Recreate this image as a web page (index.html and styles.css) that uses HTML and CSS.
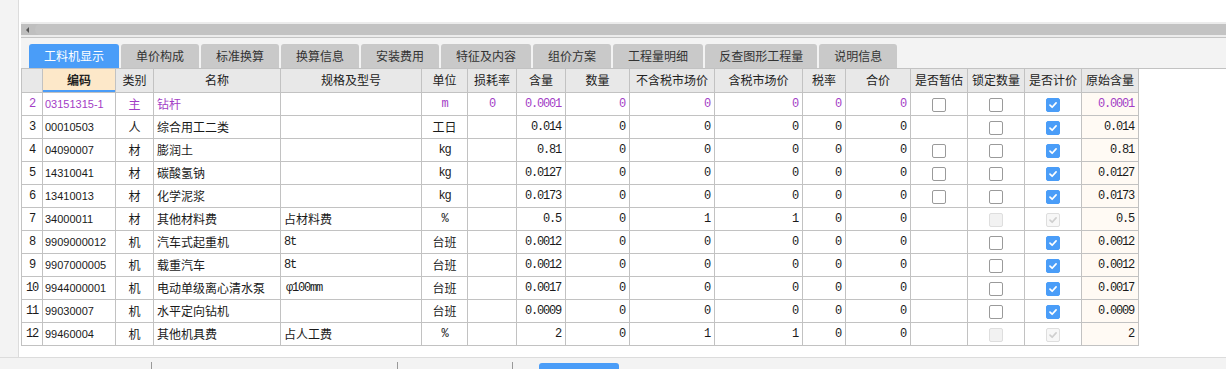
FILE: index.html
```html
<!DOCTYPE html>
<html lang="zh-CN">

<head>
  <meta charset="UTF-8">
  <title>工料机显示</title>
  <link rel="stylesheet" href="styles.css">
</head>

<body>
  <div class="app">
    <div class="workspace">
      <div class="side"></div>
      <div class="main">
        <div class="top-blank"></div>
        <div class="hscroll">
          <span class="hscroll-arrow"></span>
          <span class="hscroll-thumb"></span>
        </div>
        <div class="tab-bar">
          <div class="tab active">工料机显示</div>
          <div class="tab">单价构成</div>
          <div class="tab">标准换算</div>
          <div class="tab">换算信息</div>
          <div class="tab">安装费用</div>
          <div class="tab">特征及内容</div>
          <div class="tab">组价方案</div>
          <div class="tab">工程量明细</div>
          <div class="tab">反查图形工程量</div>
          <div class="tab">说明信息</div>
        </div>

        <div class="grid-panel">
          <table class="grid">
            <colgroup>
              <col style="width: 21px">
              <col style="width: 73px">
              <col style="width: 38px">
              <col style="width: 127px">
              <col style="width: 141px">
              <col style="width: 46px">
              <col style="width: 49px">
              <col style="width: 49px">
              <col style="width: 64px">
              <col style="width: 85px">
              <col style="width: 88px">
              <col style="width: 43px">
              <col style="width: 65px">
              <col style="width: 57px">
              <col style="width: 57px">
              <col style="width: 57px">
              <col style="width: 57px">
            </colgroup>
            <thead>
              <tr>
                <th></th>
                <th class="sorted">编码</th>
                <th>类别</th>
                <th>名称</th>
                <th>规格及型号</th>
                <th>单位</th>
                <th>损耗率</th>
                <th>含量</th>
                <th>数量</th>
                <th>不含税市场价</th>
                <th>含税市场价</th>
                <th>税率</th>
                <th>合价</th>
                <th>是否暂估</th>
                <th>锁定数量</th>
                <th>是否计价</th>
                <th>原始含量</th>
              </tr>
            </thead>
            <tbody>
              <tr class="main-row">
                <td class="no">2</td>
                <td class="code">03151315-1</td>
                <td class="center">主</td>
                <td>钻杆</td>
                <td></td>
                <td class="center num">m</td>
                <td class="center num">0</td>
                <td class="num right">0.0001</td>
                <td class="num right">0</td>
                <td class="num right">0</td>
                <td class="num right">0</td>
                <td class="num right">0</td>
                <td class="num right">0</td>
                <td class="center"><span class="cb"></span></td>
                <td class="center"><span class="cb"></span></td>
                <td class="center"><span class="cb on"><svg viewBox="0 0 14 14"><path d="M3.5 7.2 6 9.6 10.6 4.6"/></svg></span></td>
                <td class="num right orig">0.0001</td>
              </tr>
              <tr>
                <td class="no">3</td>
                <td class="code">00010503</td>
                <td class="center">人</td>
                <td>综合用工二类</td>
                <td></td>
                <td class="center">工日</td>
                <td></td>
                <td class="num right">0.014</td>
                <td class="num right">0</td>
                <td class="num right">0</td>
                <td class="num right">0</td>
                <td class="num right">0</td>
                <td class="num right">0</td>
                <td></td>
                <td class="center"><span class="cb"></span></td>
                <td class="center"><span class="cb on"><svg viewBox="0 0 14 14"><path d="M3.5 7.2 6 9.6 10.6 4.6"/></svg></span></td>
                <td class="num right orig">0.014</td>
              </tr>
              <tr>
                <td class="no">4</td>
                <td class="code">04090007</td>
                <td class="center">材</td>
                <td>膨润土</td>
                <td></td>
                <td class="center num">kg</td>
                <td></td>
                <td class="num right">0.81</td>
                <td class="num right">0</td>
                <td class="num right">0</td>
                <td class="num right">0</td>
                <td class="num right">0</td>
                <td class="num right">0</td>
                <td class="center"><span class="cb"></span></td>
                <td class="center"><span class="cb"></span></td>
                <td class="center"><span class="cb on"><svg viewBox="0 0 14 14"><path d="M3.5 7.2 6 9.6 10.6 4.6"/></svg></span></td>
                <td class="num right orig">0.81</td>
              </tr>
              <tr>
                <td class="no">5</td>
                <td class="code">14310041</td>
                <td class="center">材</td>
                <td>碳酸氢钠</td>
                <td></td>
                <td class="center num">kg</td>
                <td></td>
                <td class="num right">0.0127</td>
                <td class="num right">0</td>
                <td class="num right">0</td>
                <td class="num right">0</td>
                <td class="num right">0</td>
                <td class="num right">0</td>
                <td class="center"><span class="cb"></span></td>
                <td class="center"><span class="cb"></span></td>
                <td class="center"><span class="cb on"><svg viewBox="0 0 14 14"><path d="M3.5 7.2 6 9.6 10.6 4.6"/></svg></span></td>
                <td class="num right orig">0.0127</td>
              </tr>
              <tr>
                <td class="no">6</td>
                <td class="code">13410013</td>
                <td class="center">材</td>
                <td>化学泥浆</td>
                <td></td>
                <td class="center num">kg</td>
                <td></td>
                <td class="num right">0.0173</td>
                <td class="num right">0</td>
                <td class="num right">0</td>
                <td class="num right">0</td>
                <td class="num right">0</td>
                <td class="num right">0</td>
                <td class="center"><span class="cb"></span></td>
                <td class="center"><span class="cb"></span></td>
                <td class="center"><span class="cb on"><svg viewBox="0 0 14 14"><path d="M3.5 7.2 6 9.6 10.6 4.6"/></svg></span></td>
                <td class="num right orig">0.0173</td>
              </tr>
              <tr>
                <td class="no">7</td>
                <td class="code">34000011</td>
                <td class="center">材</td>
                <td>其他材料费</td>
                <td>占材料费</td>
                <td class="center num">%</td>
                <td></td>
                <td class="num right">0.5</td>
                <td class="num right">0</td>
                <td class="num right">1</td>
                <td class="num right">1</td>
                <td class="num right">0</td>
                <td class="num right">0</td>
                <td></td>
                <td class="center"><span class="cb disabled"></span></td>
                <td class="center"><span class="cb disabled on-dis"><svg viewBox="0 0 14 14"><path d="M3.5 7.2 6 9.6 10.6 4.6"/></svg></span></td>
                <td class="num right orig">0.5</td>
              </tr>
              <tr>
                <td class="no">8</td>
                <td class="code">9909000012</td>
                <td class="center">机</td>
                <td>汽车式起重机</td>
                <td class="num">8t</td>
                <td class="center">台班</td>
                <td></td>
                <td class="num right">0.0012</td>
                <td class="num right">0</td>
                <td class="num right">0</td>
                <td class="num right">0</td>
                <td class="num right">0</td>
                <td class="num right">0</td>
                <td></td>
                <td class="center"><span class="cb"></span></td>
                <td class="center"><span class="cb on"><svg viewBox="0 0 14 14"><path d="M3.5 7.2 6 9.6 10.6 4.6"/></svg></span></td>
                <td class="num right orig">0.0012</td>
              </tr>
              <tr>
                <td class="no">9</td>
                <td class="code">9907000005</td>
                <td class="center">机</td>
                <td>载重汽车</td>
                <td class="num">8t</td>
                <td class="center">台班</td>
                <td></td>
                <td class="num right">0.0012</td>
                <td class="num right">0</td>
                <td class="num right">0</td>
                <td class="num right">0</td>
                <td class="num right">0</td>
                <td class="num right">0</td>
                <td></td>
                <td class="center"><span class="cb"></span></td>
                <td class="center"><span class="cb on"><svg viewBox="0 0 14 14"><path d="M3.5 7.2 6 9.6 10.6 4.6"/></svg></span></td>
                <td class="num right orig">0.0012</td>
              </tr>
              <tr>
                <td class="no">10</td>
                <td class="code">9944000001</td>
                <td class="center">机</td>
                <td>电动单级离心清水泵</td>
                <td class="num spec">φ100mm</td>
                <td class="center">台班</td>
                <td></td>
                <td class="num right">0.0017</td>
                <td class="num right">0</td>
                <td class="num right">0</td>
                <td class="num right">0</td>
                <td class="num right">0</td>
                <td class="num right">0</td>
                <td></td>
                <td class="center"><span class="cb"></span></td>
                <td class="center"><span class="cb on"><svg viewBox="0 0 14 14"><path d="M3.5 7.2 6 9.6 10.6 4.6"/></svg></span></td>
                <td class="num right orig">0.0017</td>
              </tr>
              <tr>
                <td class="no">11</td>
                <td class="code">99030007</td>
                <td class="center">机</td>
                <td>水平定向钻机</td>
                <td></td>
                <td class="center">台班</td>
                <td></td>
                <td class="num right">0.0009</td>
                <td class="num right">0</td>
                <td class="num right">0</td>
                <td class="num right">0</td>
                <td class="num right">0</td>
                <td class="num right">0</td>
                <td></td>
                <td class="center"><span class="cb"></span></td>
                <td class="center"><span class="cb on"><svg viewBox="0 0 14 14"><path d="M3.5 7.2 6 9.6 10.6 4.6"/></svg></span></td>
                <td class="num right orig">0.0009</td>
              </tr>
              <tr>
                <td class="no">12</td>
                <td class="code">99460004</td>
                <td class="center">机</td>
                <td>其他机具费</td>
                <td>占人工费</td>
                <td class="center num">%</td>
                <td></td>
                <td class="num right">2</td>
                <td class="num right">0</td>
                <td class="num right">1</td>
                <td class="num right">1</td>
                <td class="num right">0</td>
                <td class="num right">0</td>
                <td></td>
                <td class="center"><span class="cb disabled"></span></td>
                <td class="center"><span class="cb disabled on-dis"><svg viewBox="0 0 14 14"><path d="M3.5 7.2 6 9.6 10.6 4.6"/></svg></span></td>
                <td class="num right orig">2</td>
              </tr>
            </tbody>
          </table>
        </div>
      </div>
    </div>

    <div class="status-bar">
      <span class="status-sep first"></span>
      <span class="status-sep second"></span>
      <span class="status-sep third"></span>
      <span class="status-btn"></span>
    </div>
  </div>
</body>

</html>
```

FILE: styles.css
```css
:root {
  --blue: #4a9df8;
  --panel-bg: #f3f3f3;
  --grid-line: #c2c2c2;
  --head-bg: #e8e8e8;
  --purple: #a33dc6;
  --text-color: #1a1a1a;
}

html,
body {
  margin: 0;
  padding: 0;
}

body {
  width: 1226px;
  height: 369px;
  overflow: hidden;
  background-color: #fff;
  color: var(--text-color);
  font-family: "Noto Sans CJK SC", "Liberation Sans", sans-serif;
  font-size: 12px;
}

.app {
  display: flex;
  flex-direction: column;
  height: 369px;
}

.workspace {
  display: flex;
  height: 357px;
}

.side {
  width: 18px;
  background-color: var(--panel-bg);
  border-right: 1px solid #dcdcdc;
}

.main {
  flex: 1;
  display: flex;
  flex-direction: column;
  padding-left: 2px;
  min-width: 0;
}

.top-blank {
  height: 22px;
}

/* 横スクロールバー */
.hscroll {
  display: flex;
  align-items: center;
  height: 11px;
  background-color: #bfbfbf;
  border-top: 2px solid #ececec;
  border-bottom: 2px solid #ececec;
  box-shadow: 0 1px 0 #c4c4c4;
  margin-bottom: 1px;
}

.hscroll-arrow {
  width: 0;
  height: 0;
  margin-left: 5px;
  border-top: 3px solid transparent;
  border-bottom: 3px solid transparent;
  border-right: 3px solid #555;
}

.hscroll-thumb {
  flex: 1;
  height: 11px;
  margin-left: 6px;
  border-radius: 5px 0 0 5px;
  background-color: #c3c3c3;
}

/* タブ */
.tab-bar {
  display: flex;
  gap: 2px;
  height: 24px;
  padding: 6px 0 0 8px;
  background-color: var(--panel-bg);
}

.tab {
  display: flex;
  align-items: center;
  justify-content: center;
  padding: 0 15px;
  height: 24px;
  background-color: #c9c9c9;
  border-radius: 3px 3px 0 0;
  color: #333;
  white-space: nowrap;
  line-height: 1;
}

.tab.active {
  background-color: var(--blue);
  color: #fff;
}

.tab:nth-child(9) {
  padding: 0 14px;
}

/* グリッド */
.grid-panel {
  flex: 1;
  border-top: 1px solid var(--grid-line);
  background-color: #fff;
}

.grid {
  table-layout: fixed;
  border-collapse: collapse;
  width: 1118px;
}

.grid tr {
  height: 23px;
}

.grid th,
.grid td {
  border: 1px solid var(--grid-line);
  padding: 0 3px;
  line-height: 20px;
  white-space: nowrap;
  overflow: hidden;
  vertical-align: middle;
}

.grid thead th {
  border-top: none;
  background-color: var(--head-bg);
  font-weight: normal;
  color: #222;
  padding: 0;
}

.grid th.sorted {
  background-color: #fde8c9;
  font-weight: bold;
  box-shadow: inset 0 -2px 0 var(--blue);
}

.grid td {
  color: var(--text-color);
}

.grid td.no {
  text-align: center;
  padding: 0;
  font-family: "Liberation Mono", monospace;
  font-size: 12px;
  letter-spacing: -1.2px;
}

.grid td.code {
  font-family: "Liberation Sans", sans-serif;
  font-size: 11px;
  padding-left: 2px;
}

.grid td.center {
  text-align: center;
}

.grid td.right {
  text-align: right;
}

.grid td.num {
  font-family: "Liberation Mono", monospace;
  font-size: 12px;
  letter-spacing: -1.2px;
}

.grid td.num.right {
  padding-right: 4px;
}

.grid td.spec {
  padding-left: 5px;
}

.grid td.orig {
  background-color: #fffaf4;
}

.main-row td {
  color: var(--purple);
}

/* チェックボックス */
.cb {
  display: inline-block;
  box-sizing: border-box;
  width: 14px;
  height: 14px;
  border: 1px solid #9a9a9a;
  border-radius: 2px;
  background-color: #fff;
  vertical-align: middle;
}

.cb svg {
  display: block;
  width: 12px;
  height: 12px;
  fill: none;
  stroke: #fff;
  stroke-width: 2;
  stroke-linecap: round;
  stroke-linejoin: round;
}

.cb.on {
  border-color: var(--blue);
  background-color: var(--blue);
}

.cb.disabled {
  border-color: #dedede;
  background-color: #f2f2f2;
}

.cb.on-dis {
  background-color: #f7f7f7;
}

.cb.on-dis svg {
  stroke: #cfcfcf;
}

/* ステータスバー */
.status-bar {
  display: flex;
  height: 11px;
  border-top: 1px solid #dcdcdc;
  background-color: var(--panel-bg);
}

.status-sep {
  width: 1px;
  height: 7px;
  margin-top: 4px;
  background-color: #999;
}

.status-sep.first {
  margin-left: 151px;
}

.status-sep.second {
  margin-left: 245px;
}

.status-sep.third {
  margin-left: 114px;
}

.status-btn {
  width: 80px;
  height: 6px;
  margin: 5px 0 0 26px;
  border-radius: 3px 3px 0 0;
  background-color: var(--blue);
}
```
